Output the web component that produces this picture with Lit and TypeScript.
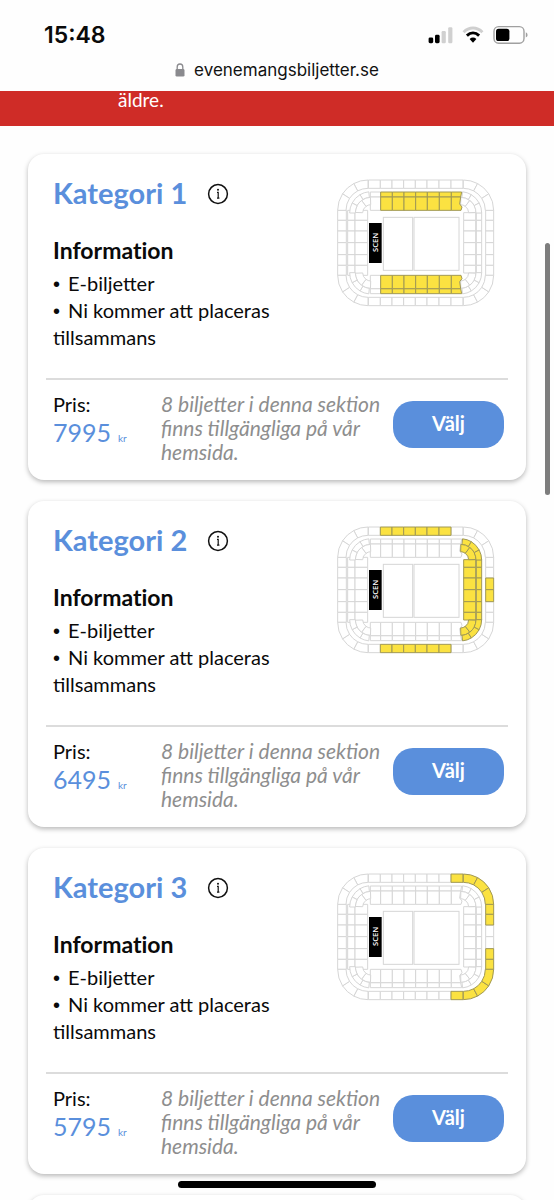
import { LitElement, html, svg, css } from "lit";
import { customElement, property } from "lit/decorators.js";

interface Category {
  name: string;
  price: number;
  seats: number;
  zones: string[];
}

/* Plan coordinates: the arena is symmetric around (272, 224.5). */
const W = 544;
const H = 449;
const COLS = [130, 166, 201, 236, 271, 306, 342, 378, 414];
const ROWS = [127, 157, 189, 224, 260, 292, 322];

interface Cell {
  d: string;
  zone: string;
}

const box = (x1: number, y1: number, x2: number, y2: number) =>
  `M${x1} ${y1}H${x2}V${y2}H${x1}Z`;

function wedge(
  cx: number, cy: number, r1: number, r2: number,
  a1: number, a2: number, mx: boolean, my: boolean,
) {
  const pt = (r: number, a: number) => {
    const t = (a * Math.PI) / 180;
    const x = cx + r * Math.sin(t);
    const y = cy - r * Math.cos(t);
    return `${(mx ? W - x : x).toFixed(1)} ${(my ? H - y : y).toFixed(1)}`;
  };
  const s = mx !== my ? 0 : 1;
  return `M${pt(r2, a1)}A${r2} ${r2} 0 0 ${s} ${pt(r2, a2)}L${pt(r1, a2)}A${r1} ${r1} 0 0 ${1 - s} ${pt(r1, a1)}Z`;
}

function buildCells(): Cell[] {
  const cells: Cell[] = [];
  for (let i = 0; i < 8; i++) {
    const [a, b] = [COLS[i], COLS[i + 1]];
    const zone = i === 7 ? "outer-corner" : i > 0 ? "outer-long" : "";
    cells.push({ d: box(a, 36, b, 61), zone });
    cells.push({ d: box(a, 388, b, 413), zone });
  }
  for (let i = 0; i < 8; i++) {
    const a = i === 0 ? 136 : COLS[i] + 1;
    const b = COLS[i + 1] + 1;
    const zone = i === 0 ? "" : "inner-long";
    if (i === 7) {
      cells.push({ d: `M379 72H410L407 87H379Z`, zone });
      cells.push({ d: `M379 87H407L404 108L411 117L408 127H379Z`, zone });
      cells.push({ d: `M379 377H410L407 362H379Z`, zone });
      cells.push({ d: `M379 362H407L404 341L411 332L408 322H379Z`, zone });
    } else {
      cells.push({ d: box(a, 72, b, 87), zone });
      cells.push({ d: box(a, 87, b, 127), zone });
      cells.push({ d: box(a, 362, b, 377), zone });
      cells.push({ d: box(a, 322, b, 362), zone });
    }
  }
  for (let i = 0; i < 6; i++) {
    const [a, b] = [ROWS[i], ROWS[i + 1]];
    const mid = i === 2 || i === 3;
    const top = i === 0 ? a + 7 : a;
    const bottom = i === 5 ? b - 7 : b;
    cells.push({ d: box(482, a, 506, b), zone: mid ? "outer-mid" : "outer-corner" });
    cells.push({ d: box(38, a, 64, b), zone: "" });
    cells.push({ d: box(454, top, 470, bottom), zone: "inner-end" });
    cells.push({ d: box(416, top, 452, bottom), zone: "inner-end" });
    cells.push({ d: box(68, a, 90, b), zone: "" });
    cells.push({ d: box(90, a, 128, b), zone: "" });
  }
  const outer = [0, 28, 57, 90];
  const thin = [6, 31, 62, 90];
  const thick = [2, 37, 88];
  for (const mx of [false, true]) {
    for (const my of [false, true]) {
      for (let k = 0; k < 3; k++) {
        cells.push({
          d: wedge(415, 127, 66, 91, outer[k], outer[k + 1], mx, my),
          zone: mx ? "" : "outer-corner",
        });
        cells.push({
          d: wedge(406, 135, 47, 64, thin[k], thin[k + 1], mx, my),
          zone: mx ? "" : "inner-end",
        });
        if (k < 2) {
          cells.push({
            d: wedge(406, 135, 25, 47, thick[k], thick[k + 1], mx, my),
            zone: mx ? "" : "inner-end",
          });
        }
      }
    }
  }
  return cells;
}

const CELLS = buildCells();

@customElement("arena-map")
export class ArenaMap extends LitElement {
  @property({ attribute: false }) zones: string[] = [];

  static styles = css`
    :host { display: block; }
    .plan { display: block; width: 100%; }
    .cell { fill: #fff; stroke: #d6d6d6; stroke-width: 3; }
    .cell.on { fill: #fbe241; stroke: #a09855; }
    .stage { fill: #000; }
    .stage-label { fill: #fff; font: 600 23px "Open Sans", "Noto Sans", sans-serif; }
  `;

  render() {
    const on = (c: Cell) => c.zone !== "" && this.zones.includes(c.zone);
    return html`
      <svg class="plan" viewBox="0 0 540 450" role="img" aria-label="Arenakarta">
        ${CELLS.filter((c) => !on(c)).map((c) => svg`<path class="cell" d=${c.d} />`)}
        ${CELLS.filter(on).map((c) => svg`<path class="cell on" d=${c.d} />`)}
        <rect class="cell" x="175" y="148" width="88" height="159" />
        <rect class="cell" x="267" y="148" width="135" height="159" />
        <rect class="stage" x="132" y="165" width="38" height="120" />
        <text class="stage-label" text-anchor="middle" transform="translate(160 223) rotate(-90)">SCEN</text>
      </svg>
    `;
  }
}

@customElement("ticket-card")
export class TicketCard extends LitElement {
  @property({ attribute: false }) category!: Category;

  static styles = css`
    :host {
      display: block;
      border-radius: 16px;
      background: #fff;
      box-shadow: 0 2px 5px rgba(0, 0, 0, 0.28);
      padding: 0 18px 16px;
      font-family: Lato, "Open Sans", sans-serif;
      font-size: 20px;
      color: #0a0a0a;
    }
    .top {
      display: grid;
      grid-template-columns: minmax(0, 1fr) 180px;
      padding: 14px 3px 27px 7px;
      border-bottom: 2px solid #dcdcdc;
    }
    .head { display: flex; align-items: center; gap: 20px; padding-top: 7px; }
    .name { margin: 0; font-size: 29px; line-height: 36px; font-weight: 700; color: #5a8fdc; }
    .info { display: flex; padding: 0; border: 0; background: none; color: #111; margin-top: 2px; }
    .sub {
      margin: 25px 0 6px;
      font-size: 23px;
      line-height: 28px;
      font-weight: 700;
      font-variant-ligatures: none;
    }
    .facts { margin: 0; padding: 0; list-style: none; line-height: 27px; }
    .facts li::before {
      content: "•";
      margin-right: 8px;
      font-family: "Liberation Sans", sans-serif;
      line-height: 1;
    }
    .bottom {
      display: grid;
      grid-template-columns: 108px minmax(0, 1fr) 111px;
      padding: 12px 4px 0 7px;
    }
    .label { line-height: 24px; }
    .price { margin-top: 1px; font-size: 25px; line-height: 30px; color: #5a8fdc; white-space: nowrap; }
    .unit { font-size: 10px; margin-left: 7px; }
    .stock { margin: 0; font-size: 21px; line-height: 24px; font-style: italic; color: #8e8e8e; }
    .pick {
      height: 47px;
      margin-top: 9px;
      padding: 0 0 4px;
      border: 0;
      border-radius: 20px;
      background: #5a8fdc;
      color: #fff;
      font: 700 20px Lato, "Open Sans", sans-serif;
    }
  `;

  render() {
    const c = this.category;
    const stock = `${c.seats} biljetter i denna sektion finns tillgängliga på vår hemsida.`;
    return html`
      <div class="top">
        <div>
          <div class="head">
            <h2 class="name">${c.name}</h2>
            <button class="info" aria-label="Mer information">
              <svg width="22" height="22" viewBox="0 0 22 22" fill="none" stroke="currentColor">
                <circle cx="11" cy="11" r="9.4" stroke-width="1.5" />
                <path d="M10 9.4H11.2V15.2M10 15.2H12.4" stroke-width="1.2" />
                <circle cx="11" cy="6.8" r="1" fill="currentColor" stroke="none" />
              </svg>
            </button>
          </div>
          <h3 class="sub">Information</h3>
          <ul class="facts">
            <li>E-biljetter</li>
            <li>Ni kommer att placeras tillsammans</li>
          </ul>
        </div>
        <arena-map .zones=${c.zones}></arena-map>
      </div>
      <div class="bottom">
        <div>
          <div class="label">Pris:</div>
          <div class="price">${c.price}<span class="unit">kr</span></div>
        </div>
        <p class="stock">${stock}</p>
        <button class="pick">Välj</button>
      </div>
    `;
  }
}

@customElement("app-root")
export class AppRoot extends LitElement {
  private categories: Category[] = [
    { name: "Kategori 1", price: 7995, seats: 8, zones: ["inner-long"] },
    { name: "Kategori 2", price: 6495, seats: 8, zones: ["outer-long", "inner-end", "outer-mid"] },
    { name: "Kategori 3", price: 5795, seats: 8, zones: ["outer-corner"] },
  ];

  static styles = css`
    :host {
      display: block;
      position: relative;
      height: 100vh;
      overflow: hidden;
      background: #fefefe;
      font-family: Inter, "Liberation Sans", sans-serif;
    }
    .status {
      display: flex;
      justify-content: space-between;
      align-items: center;
      padding: 20px 26px 0 44px;
      height: 30px;
    }
    .time { font-size: 23px; line-height: 30px; font-weight: 600; color: #0a0a0a; }
    .signals { display: flex; align-items: center; gap: 9px; }
    .address {
      display: flex;
      justify-content: center;
      align-items: center;
      gap: 9px;
      height: 24px;
      padding: 8px 0 9px;
      font-size: 17px;
      line-height: 24px;
      color: #111;
    }
    .banner {
      display: flex;
      align-items: flex-end;
      height: 22px;
      padding: 0 118px 13px;
      overflow: hidden;
      background: #cf2c27;
      color: #fff;
      font-family: Lato, "Open Sans", sans-serif;
      font-size: 19px;
      line-height: 27px;
    }
    .list { display: flex; flex-direction: column; gap: 21px; padding: 28px; }
    .upcoming {
      height: 120px;
      border-radius: 16px;
      background: #fff;
      box-shadow: 0 2px 5px rgba(0, 0, 0, 0.28);
    }
    .scroll {
      position: absolute;
      top: 243px;
      right: 4px;
      width: 5px;
      height: 252px;
      border-radius: 3px;
      background: #7d7d7d;
    }
    .home {
      position: absolute;
      bottom: 12px;
      left: 50%;
      width: 198px;
      height: 7px;
      border-radius: 4px;
      background: #000;
      transform: translateX(-50%);
    }
  `;

  render() {
    return html`
      <header>
        <div class="status">
          <span class="time">15:48</span>
          <div class="signals">
            <svg width="25" height="18" viewBox="0 0 25 18">
              <rect x="0.6" y="11.4" width="4.6" height="5.8" rx="1.4" />
              <rect x="7" y="8.8" width="4.6" height="8.4" rx="1.4" />
              <rect x="13.6" y="5" width="4.2" height="12.2" rx="1.2" fill="#d0d0d0" />
              <rect x="20.2" y="1.2" width="4.2" height="16" rx="1.2" fill="#d0d0d0" />
            </svg>
            <svg width="22" height="18" viewBox="0 0 22 18" fill="none">
              <path d="M1.6 6.2C7 0.6 15 0.6 20.4 6.2" stroke="#cfcfcf" stroke-width="3" />
              <path d="M4.9 9.6C8.6 6.2 13.4 6.2 17.1 9.6" stroke="#000" stroke-width="3" />
              <path d="M7.6 13Q11 10.2 14.4 13L11 16.8Z" fill="#000" />
            </svg>
            <svg width="35" height="20" viewBox="0 0 35 20">
              <rect x="1" y="1.6" width="30" height="16.6" rx="4.6" fill="none" stroke="#a0a0a0" stroke-width="1.4" />
              <rect x="3" y="3.7" width="13.4" height="12.4" rx="2.6" />
              <path d="M32.8 7.2Q34.6 8 34.6 9.9T32.8 12.6Z" fill="#a0a0a0" />
            </svg>
          </div>
        </div>
        <div class="address">
          <svg width="10" height="14" viewBox="0 0 10 14">
            <path d="M2.2 7V4A2.8 3 0 0 1 7.8 4V7" fill="none" stroke="#8a8a8e" stroke-width="1.3" />
            <rect x="0.5" y="6" width="9" height="7.6" rx="1.4" fill="#8a8a8e" />
          </svg>
          <span>evenemangsbiljetter.se</span>
        </div>
      </header>
      <div class="banner">äldre.</div>
      <main class="list">
        ${this.categories.map((c) => html`<ticket-card .category=${c}></ticket-card>`)}
        <div class="upcoming"></div>
      </main>
      <div class="scroll"></div>
      <div class="home"></div>
    `;
  }
}
